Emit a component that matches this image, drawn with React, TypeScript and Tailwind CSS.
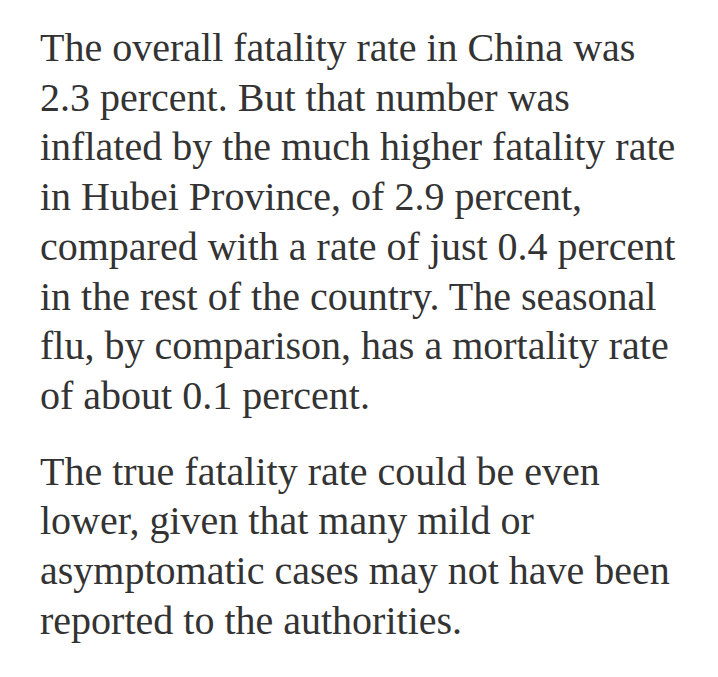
import React from "react";

const p1 = [
  "The overall fatality rate in China was",
  "2.3 percent. But that number was",
  "inflated by the much higher fatality rate",
  "in Hubei Province, of 2.9 percent,",
  "compared with a rate of just 0.4 percent",
  "in the rest of the country. The seasonal",
  "flu, by comparison, has a mortality rate",
  "of about 0.1 percent.",
];
const p2 = [
  "The true fatality rate could be even",
  "lower, given that many mild or",
  "asymptomatic cases may not have been",
  "reported to the authorities.",
];

export default function App() {
  return (
    <div className="w-[718px] h-[677px] bg-white overflow-hidden pl-[40px] pt-[23px] text-[#333333] [font-family:'Liberation_Serif',serif] text-[40px] leading-[49.7px]">
      <p className="whitespace-nowrap">
        {p1.map((l, i) => (
          <span key={i} className="block">{l}</span>
        ))}
      </p>
      <p className="whitespace-nowrap mt-[26px]">
        {p2.map((l, i) => (
          <span key={i} className="block">{l}</span>
        ))}
      </p>
    </div>
  );
}
